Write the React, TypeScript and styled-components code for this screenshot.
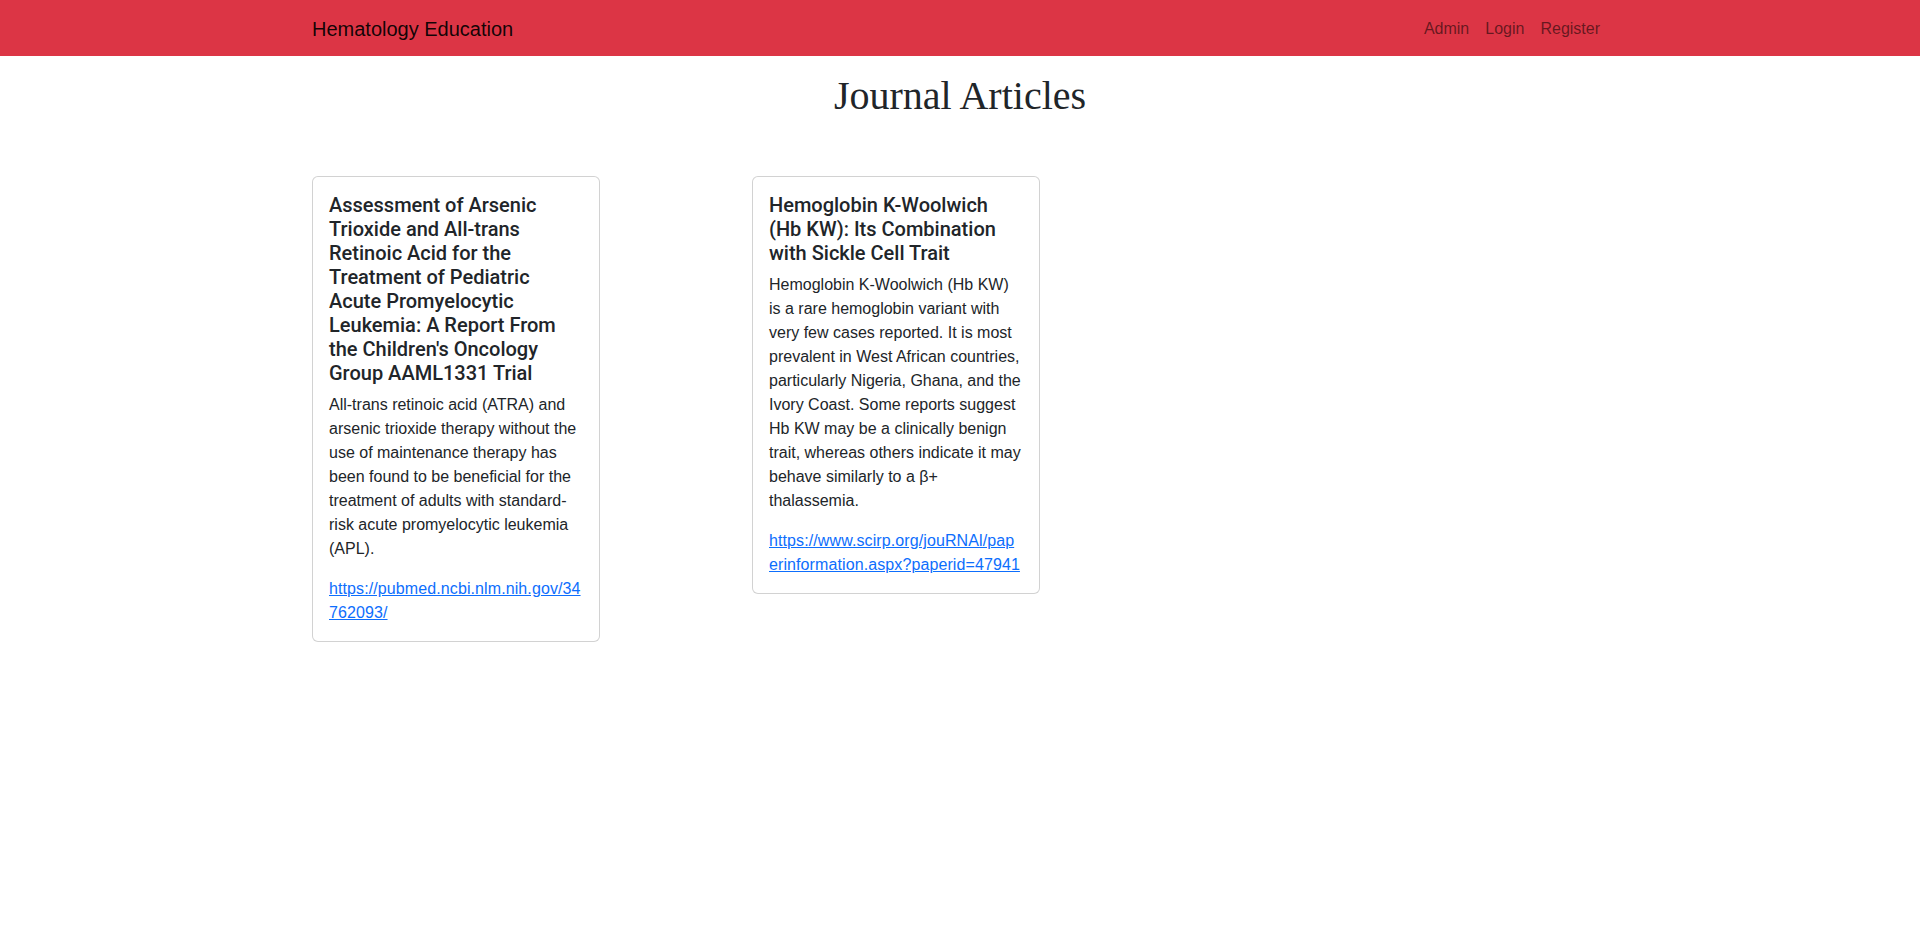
import React from "react";
import styled, { createGlobalStyle } from "styled-components";

const GlobalStyle = createGlobalStyle`
  *, *::before, *::after { box-sizing: border-box; }
  html, body { margin: 0; padding: 0; background: #fff; }
  body {
    font-family: "Liberation Sans", Arial, sans-serif;
    font-size: 16px;
    line-height: 1.5;
    color: #212529;
  }
`;

const NavBar = styled.nav`
  background: #dc3545;
  padding: 9px 0 7px;
`;

const NavInner = styled.div`
  max-width: 1320px;
  margin: 0 auto;
  padding: 0 12px;
  display: flex;
  align-items: center;
  justify-content: space-between;
`;

const Brand = styled.a`
  font-size: 20px;
  line-height: 30px;
  padding: 5px 0;
  color: rgba(0, 0, 0, 0.92);
  text-decoration: none;
  margin-right: 16px;
`;

const NavLinks = styled.div`
  display: flex;
  align-items: center;
`;

const NavLink = styled.a`
  padding: 8px;
  font-size: 16px;
  line-height: 24px;
  color: rgba(0, 0, 0, 0.55);
  text-decoration: none;
`;

const Main = styled.main`
  max-width: 1320px;
  margin: 16px auto 0;
  padding: 0 12px;
`;

const Title = styled.h1`
  font-family: "Liberation Serif", "Times New Roman", serif;
  font-weight: 400;
  font-size: 40px;
  line-height: 1.2;
  text-align: center;
  margin: 0 0 8px;
  color: #212529;
`;

const Grid = styled.div`
  margin-top: 56px;
  display: grid;
  grid-template-columns: repeat(3, 1fr);
  gap: 24px;
  align-items: start;
`;

const Card = styled.div`
  width: 288px;
  border: 1px solid rgba(0, 0, 0, 0.175);
  border-radius: 6px;
  padding: 16px;
  overflow-wrap: break-word;
  word-wrap: break-word;
  background: #fff;
`;

const CardTitle = styled.h5`
  font-family: Roboto, "Liberation Sans", Arial, sans-serif;
  font-weight: 500;
  font-size: 20px;
  line-height: 1.2;
  margin: 0 0 8px;
  color: #212529;
`;

const CardText = styled.p`
  margin: 0 0 16px;
`;

const CardLink = styled.a`
  color: #0d6efd;
  text-decoration: underline;
  letter-spacing: 0.1px;
`;

const articles = [
  {
    title:
      "Assessment of Arsenic Trioxide and All-trans Retinoic Acid for the Treatment of Pediatric Acute Promyelocytic Leukemia: A Report From the Children's Oncology Group AAML1331 Trial",
    text:
      "All-trans retinoic acid (ATRA) and arsenic trioxide therapy without the use of maintenance therapy has been found to be beneficial for the treatment of adults with standard-risk acute promyelocytic leukemia (APL).",
    url: "https://pubmed.ncbi.nlm.nih.gov/34762093/",
  },
  {
    title: "Hemoglobin K-Woolwich (Hb KW): Its Combination with Sickle Cell Trait",
    text:
      "Hemoglobin K-Woolwich (Hb KW) is a rare hemoglobin variant with very few cases reported. It is most prevalent in West African countries, particularly Nigeria, Ghana, and the Ivory Coast. Some reports suggest Hb KW may be a clinically benign trait, whereas others indicate it may behave similarly to a β+ thalassemia.",
    url: "https://www.scirp.org/jouRNAl/paperinformation.aspx?paperid=47941",
  },
];

export default function App() {
  return (
    <>
      <GlobalStyle />
      <NavBar>
        <NavInner>
          <Brand href="#">Hematology Education</Brand>
          <NavLinks>
            <NavLink href="#">Admin</NavLink>
            <NavLink href="#">Login</NavLink>
            <NavLink href="#">Register</NavLink>
          </NavLinks>
        </NavInner>
      </NavBar>
      <Main>
        <Title>Journal Articles</Title>
        <Grid>
          {articles.map((a) => (
            <Card key={a.url}>
              <CardTitle>{a.title}</CardTitle>
              <CardText>{a.text}</CardText>
              <CardLink href={a.url}>{a.url}</CardLink>
            </Card>
          ))}
        </Grid>
      </Main>
    </>
  );
}
